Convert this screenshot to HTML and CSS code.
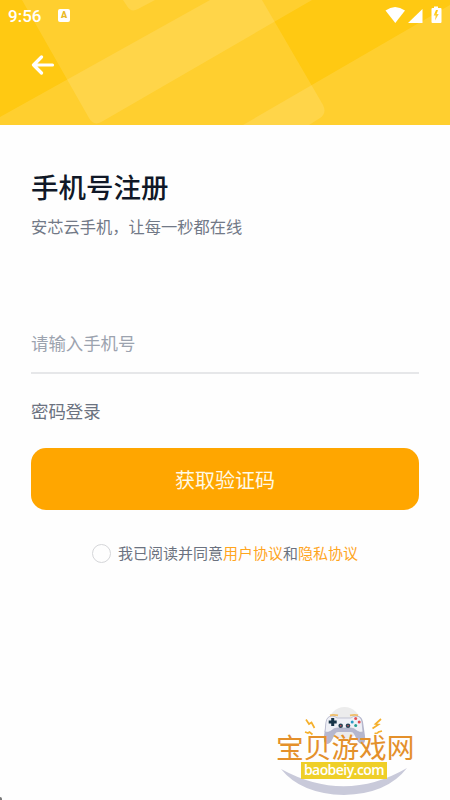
FILE: index.html
```html
<!DOCTYPE html>
<html lang="zh-CN">
<head>
<meta charset="utf-8">
<title>手机号注册</title>
<link rel="stylesheet" href="styles.css">
</head>
<body>
<div class="screen">
  <header class="header">
    <svg class="header-art" width="450" height="125" viewBox="0 0 450 125" aria-hidden="true">
      <g fill="#fff" fill-opacity=".125">
        <path d="M22 0 89 118Q94 127 103 121L312 0Z"/>
        <path d="M0 117 210 0H262L323 105Q327 113 320 118L309 125H0Z"/>
        <path d="M450 5V125H243Z"/>
        <path d="M123 0 127 6Q131 13 138 9L155 0Z"/>
      </g>
    </svg>
    <div class="status">
      <span class="time">9:56</span>
      <span class="badge">A</span>
      <svg class="status-icons" width="60" height="20" viewBox="0 0 60 20" fill="#fff">
        <path d="M.5 4.500Q10-2.500 20 4.500L10.300 17Z"/>
        <path d="M37.500 3V17H23Z"/>
        <path fill-rule="evenodd" d="M49 .500h4V2h2.500q1 0 1 1v13q0 1-1 1h-8q-1 0-1-1V3q0-1 1-1H49ZM51 4 48.700 9.500h2L50 14.500 53.700 8h-2L53 4Z"/>
      </svg>
    </div>
    <svg class="back" width="24" height="20" viewBox="0 0 24 20" fill="none" stroke="#fff" stroke-width="3.200" stroke-linecap="round" stroke-linejoin="round">
      <path d="M21.500 10H2.500M10.500 2 2.500 10 10.500 18"/>
    </svg>
  </header>
  <main class="content">
    <h1 class="title">手机号注册</h1>
    <p class="subtitle">安芯云手机，让每一秒都在线</p>
    <div class="field">请输入手机号</div>
    <div class="password-login">密码登录</div>
    <button class="submit">获取验证码</button>
    <div class="agreement">
      <span class="radio"></span>
      <span>我已阅读并同意<span class="link">用户协议</span>和<span class="link">隐私协议</span></span>
    </div>
  </main>
  <div class="watermark">
    <svg class="mark-art" width="150" height="91" viewBox="0 0 150 91">
      <circle cx="74.500" cy="18" r="16" fill="#ececec"/>
      <path d="M11 64Q75 99 137 63Q117 89 74 90Q31 89 11 64Z" fill="#c9cada"/>
      <path d="M62 11q-5 0-6 6l-2 14q-1 7 3 8 3 0 5-4l3-6q1-2 3-2h13q2 0 3 2l3 6q2 4 5 4 4-1 3-8l-2-14q-1-6-6-6-3 0-5 2H67q-2-2-5-2Z" fill="#b5b7ce"/>
      <path d="M62 11q-5 0-6 6l-1 10q3 1 6-1 3-3 6-3h14q3 0 6 3 3 2 6 1l-1-10q-1-6-6-6-3 0-5 2H67q-2-2-5-2Z" fill="#eff0f6" stroke="#a6a8c0" stroke-width=".6"/>
      <path d="M60 10.300q3-1 8 0M80 10.300q5-1 8 0" fill="none" stroke="#efbd67" stroke-width="1.800"/>
      <path d="M62.700 13v8M58.700 17h8" stroke="#173447" stroke-width="3"/>
      <circle cx="70.700" cy="20.800" r="2.300" fill="#274354"/><circle cx="78" cy="20.800" r="2.300" fill="#274354"/>
      <circle cx="70.700" cy="20.800" r=".8" fill="#d44b59"/><circle cx="78" cy="20.800" r=".8" fill="#d44b59"/>
      <circle cx="85.700" cy="13.500" r="1.500" fill="#e45358"/><circle cx="85.700" cy="20.500" r="1.500" fill="#269f94"/>
      <circle cx="82.200" cy="17" r="1.500" fill="#299bc6"/><circle cx="89.200" cy="17" r="1.500" fill="#dd4850"/>
      <g fill="none" stroke="#f5b02c" stroke-width="1.700" stroke-linejoin="miter">
        <path d="m36 14.500 3 4.500 2.500-1.500 3 5.500"/><path d="m35 27 3 1 1.500-1 3 2.500"/>
        <path d="m111 14-5.500 5 3 .5-6 4"/><path d="m112 26-3.500 1-1 1-3 .5"/>
      </g>
    </svg>
    <div class="mark-name">宝贝游戏网</div>
    <div class="mark-url">baobeiy.com</div>
  </div>
  <span class="corner"></span>
</div>
</body>
</html>
```
FILE: styles.css
```css
* { box-sizing: border-box; }
body { margin: 0; background: #fefefe; font-family: "Noto Sans CJK SC", sans-serif; }
.screen { position: relative; width: 450px; height: 800px; overflow: hidden; }
.header { position: relative; height: 125px; background: #ffc912; }
.header-art { position: absolute; inset: 0; }
.status { position: relative; display: flex; align-items: flex-start; height: 55px; padding: 6px 0 0 8px; }
.time { width: 50px; font: 500 17px/20px Roboto, sans-serif; color: #fff; }
.badge { width: 12px; height: 13px; margin-top: 3px; border-radius: 2px; background: #fff; color: #e9b925; font: 900 9px/13px Roboto, sans-serif; text-align: center; }
.status-icons { margin-left: 315px; flex: none; }
.back { position: relative; display: block; margin-left: 31px; }
.content { padding: 42px 31px 0; }
.title { height: 38px; margin: 0; font-size: 27.5px; line-height: 38px; font-weight: 500; color: #101827; }
.subtitle { height: 24px; margin: 9px 0 0; font-size: 16.25px; line-height: 24px; color: #727987; }
.field { height: 50px; margin-top: 86px; padding-top: 6px; border-bottom: 2px solid #e6e7e9; font-size: 17.4px; line-height: 26px; color: #9ca3af; }
.password-login { margin-top: 24px; height: 26px; font-size: 17.4px; line-height: 26px; color: #6b7280; }
.submit { display: block; width: 388px; height: 62px; margin-top: 24px; padding: 1px 0 0; border: 0; border-radius: 15px; background: #ffa600; color: #fff9e5; font: 400 20px/61px "Noto Sans CJK SC", sans-serif; }
.agreement { display: flex; align-items: center; justify-content: center; gap: 7px; height: 24px; margin-top: 31px; font-size: 15px; line-height: 24px; color: #6b7280; }
.radio { width: 19px; height: 19px; border: 1px solid #d5d6d9; border-radius: 50%; }
.link { color: #ffa51f; }
.watermark { position: absolute; left: 270px; top: 705px; width: 150px; height: 91px; padding-top: 28px; }
.mark-art { position: absolute; left: 0; top: 0; }
.mark-name { position: relative; margin-left: 6px; height: 29px; font-size: 27.7px; line-height: 27px; color: #e4902b; white-space: nowrap; }
.mark-url { position: relative; width: 86px; height: 17px; margin-left: 31px; background: #efcf28; color: #fff; font: 600 14px/15px "Open Sans", sans-serif; letter-spacing: -.55px; text-align: center; }
.corner { position: absolute; left: 0; bottom: 0; width: 2px; height: 3px; background: #777; border-top-right-radius: 2px; }
```
